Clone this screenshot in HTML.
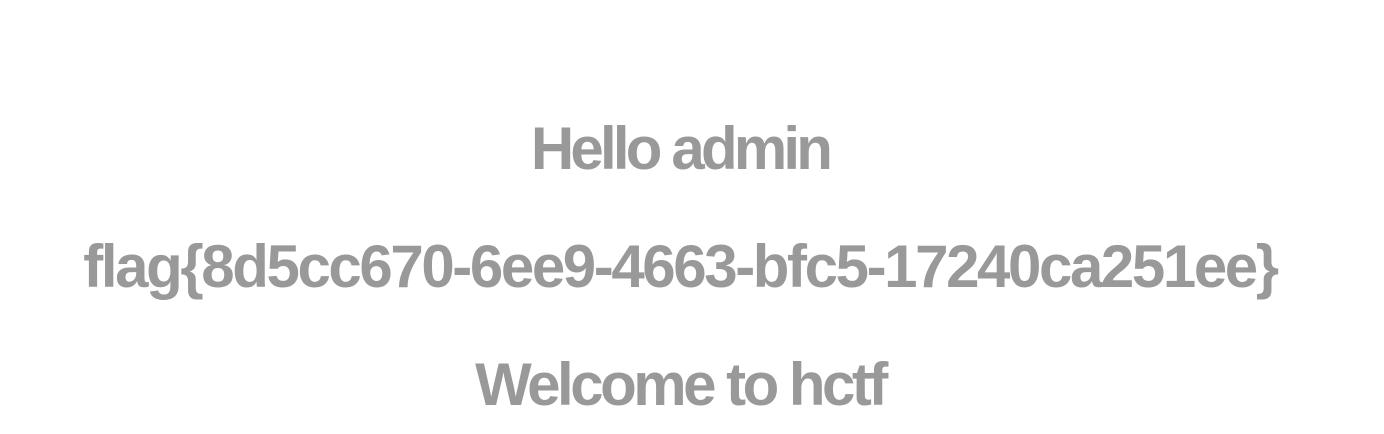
<!DOCTYPE html>
<html><head><meta charset="utf-8"><style>
html,body{margin:0;padding:0;background:#fff;width:1384px;height:434px;overflow:hidden}
.l{position:absolute;left:0;width:1360px;text-align:center;font-family:"Liberation Sans",sans-serif;font-weight:bold;font-size:60px;line-height:60px;color:#999;white-space:nowrap}
</style></head><body>
<div class="l" style="top:119px;letter-spacing:-3.8px">Hello admin</div>
<div class="l" style="top:237px;letter-spacing:-2.4px">flag{8d5cc670-6ee9-4663-bfc5-17240ca251ee}</div>
<div class="l" style="top:355px;letter-spacing:-3.5px">Welcome to hctf</div>
</body></html>
